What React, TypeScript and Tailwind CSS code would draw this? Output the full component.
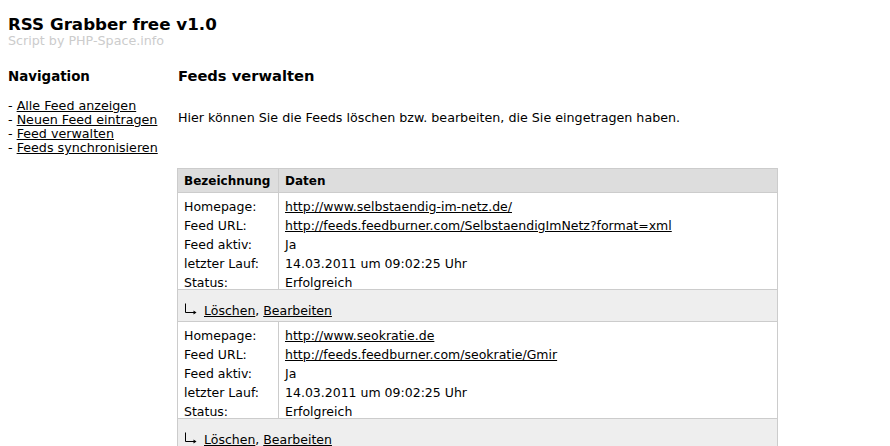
const font = { fontFamily: '"DejaVu Sans", Verdana, sans-serif' };

const feeds = [
  {
    homepage: "http://www.selbstaendig-im-netz.de/",
    url: "http://feeds.feedburner.com/SelbstaendigImNetz?format=xml",
  },
  {
    homepage: "http://www.seokratie.de",
    url: "http://feeds.feedburner.com/seokratie/Gmir",
  },
];

const nav = ["Alle Feed anzeigen", "Neuen Feed eintragen", "Feed verwalten", "Feeds synchronisieren"];

function Arrow() {
  return (
    <svg width="13" height="12" viewBox="0 0 13 12" className="inline-block align-baseline mr-[7px]">
      <path d="M1.5 0.5v9H10" stroke="#000" strokeWidth="1" fill="none" />
      <path d="M9.5 7.5l3 2-3 2z" fill="#000" />
    </svg>
  );
}

function FeedBlock({ homepage, url }: { homepage: string; url: string }) {
  return (
    <>
      <tr className="bg-white">
        <td className="border border-[#cccccc] px-[6px] pt-[4px] pb-0 align-top">
          <div className="h-[92px] leading-[19px]">
            Homepage:<br />
            Feed URL:<br />
            Feed aktiv:<br />
            letzter Lauf:<br />
            Status:
          </div>
        </td>
        <td className="border border-[#cccccc] px-[6px] pt-[4px] pb-0 align-top">
          <div className="h-[92px] leading-[19px]">
            <a className="underline text-black">{homepage}</a><br />
            <a className="underline text-black">{url}</a><br />
            Ja<br />
            14.03.2011 um 09:02:25 Uhr<br />
            Erfolgreich
          </div>
        </td>
      </tr>
      <tr className="bg-[#eeeeee]">
        <td colSpan={2} className="border border-[#cccccc] px-[6px] h-[32px] pt-[11px] pb-0 align-top leading-[19px]">
          <Arrow />
          <a className="underline">Löschen</a>, <a className="underline">Bearbeiten</a>
        </td>
      </tr>
    </>
  );
}

export default function App() {
  return (
    <div className="bg-white text-black text-[12.7px] p-2 min-h-[446px]" style={font}>
      <h1 className="text-[16.7px] font-bold leading-[20px] mt-[6px]">RSS Grabber free v1.0</h1>
      <div className="text-[12.7px] text-[#cccccc] leading-[14px]">Script by PHP-Space.info</div>

      <div className="flex mt-[18px]">
        <div className="w-[170px] shrink-0">
          <h2 className="text-[13.4px] font-bold leading-[20px] mt-px">Navigation</h2>
          <ul className="mt-[12px] leading-[14px]">
            {nav.map((n) => (
              <li key={n}>
                - <a className="underline">{n}</a>
              </li>
            ))}
          </ul>
        </div>
        <div className="flex-1">
          <h2 className="text-[14.7px] font-bold leading-[20px]">Feeds verwalten</h2>
          <p className="mt-[23px] leading-[18px]">
            Hier können Sie die Feeds löschen bzw. bearbeiten, die Sie eingetragen haben.
          </p>
          <table className="mt-[41px] w-[601px] -ml-px border-collapse table-fixed text-[12.5px]">
            <colgroup>
              <col className="w-[101px]" />
              <col />
            </colgroup>
            <thead>
              <tr className="bg-[#dddddd]">
                <th className="border border-[#cccccc] px-[6px] h-[24px] text-left font-bold text-[12px] whitespace-nowrap">Bezeichnung</th>
                <th className="border border-[#cccccc] px-[6px] h-[24px] text-left font-bold text-[12px]">Daten</th>
              </tr>
            </thead>
            <tbody>
              {feeds.map((f) => (
                <FeedBlock key={f.homepage} {...f} />
              ))}
            </tbody>
          </table>
        </div>
      </div>
    </div>
  );
}
